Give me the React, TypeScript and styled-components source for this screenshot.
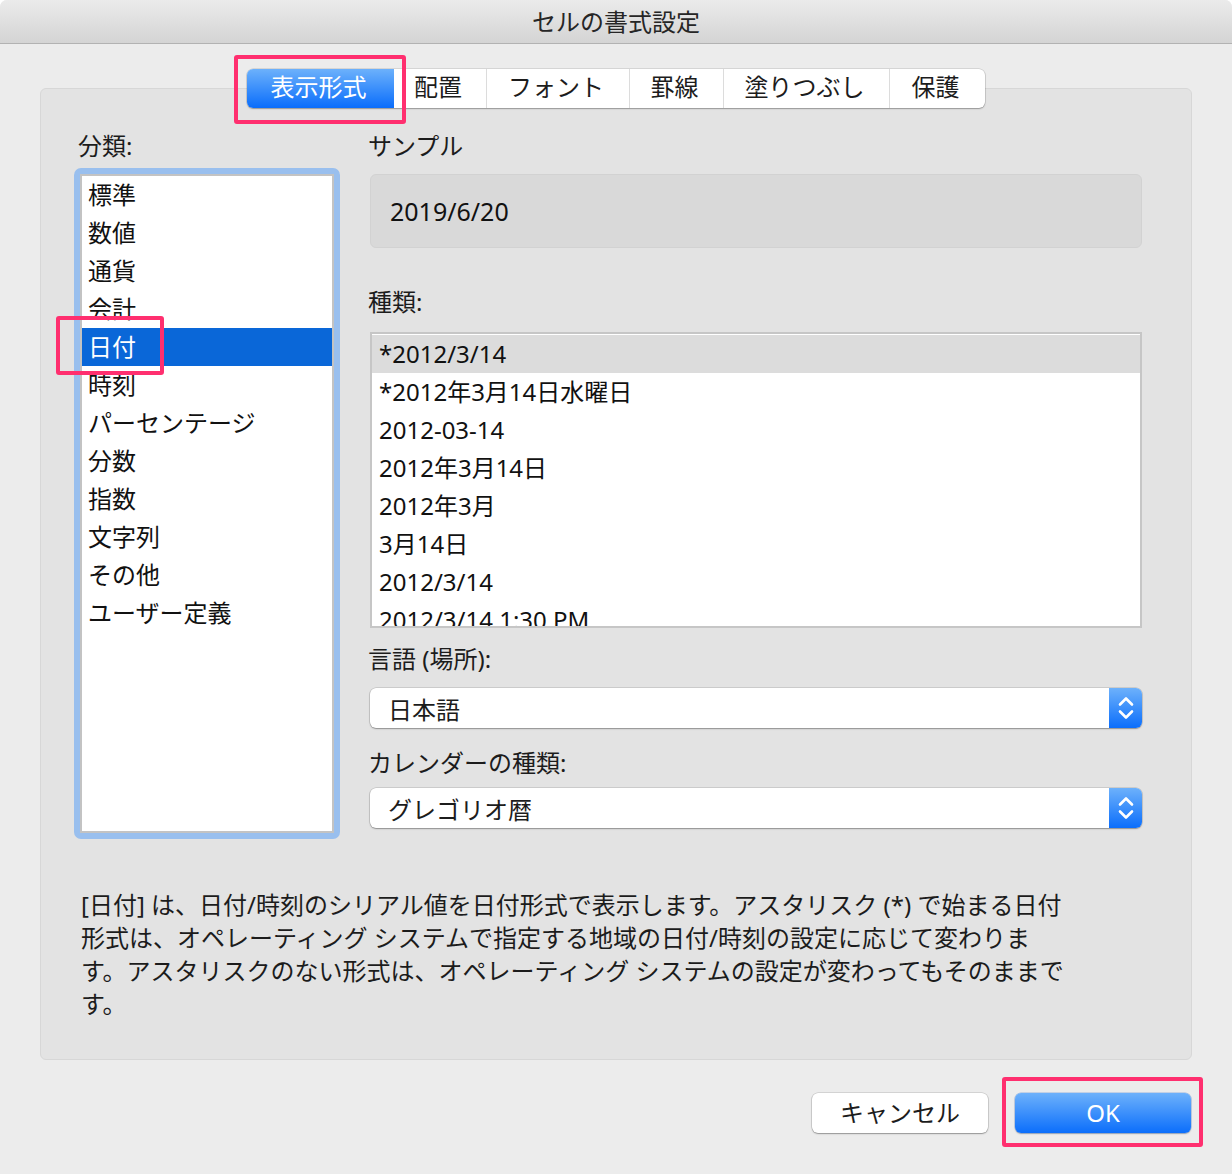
import React from 'react';
import styled, { createGlobalStyle } from 'styled-components';

const GlobalStyle = createGlobalStyle`
  html, body { margin: 0; padding: 0; background: #ffffff; }
  body { font-family: "Noto Sans", "Noto Sans CJK JP", "Liberation Sans", sans-serif; color: #1c1c1c; }
  * { box-sizing: border-box; }
`;

const Window = styled.div`
  position: relative;
  width: 1232px;
  height: 1174px;
  background: #ececec;
  border-radius: 7px 7px 0 0;
  overflow: hidden;
  display: flex;
  flex-direction: column;
`;

const TitleBar = styled.div`
  height: 44px;
  flex: none;
  display: flex;
  align-items: center;
  justify-content: center;
  background: linear-gradient(#ebebeb, #d4d4d4);
  border-bottom: 1px solid #b2b2b2;
  font-size: 24px;
  color: #262626;
  line-height: 1;
`;

const Body = styled.div`
  padding: 25px 40px 0;
  display: flex;
  flex-direction: column;
`;

const TabBar = styled.div`
  align-self: center;
  position: relative;
  z-index: 1;
  display: flex;
  height: 39px;
  background: #ffffff;
  border-radius: 6px;
  box-shadow: 0 0 0 0.5px rgba(0, 0, 0, 0.18), 0 1px 1.5px rgba(0, 0, 0, 0.28);
`;

const Tab = styled.div<{ $active?: boolean; $w: number }>`
  width: ${p => p.$w}px;
  display: flex;
  align-items: center;
  justify-content: center;
  padding-right: 4px;
  padding-bottom: 3px;
  font-size: 24px;
  line-height: 1;
  color: ${p => (p.$active ? '#ffffff' : '#1c1c1c')};
  background: ${p => (p.$active ? 'linear-gradient(#6cb1fb, #0a6dfb)' : 'transparent')};
  border-left: ${p => (p.$active ? 'none' : '1px solid #dcdcdc')};
  &:first-child { border-radius: 6px 0 0 6px; border-left: none; }
  &:first-child + & { border-left: none; }
`;

const Group = styled.div`
  margin-top: -20px;
  height: 972px;
  background: #e3e3e3;
  border: 1px solid #d7d7d7;
  border-radius: 6px;
  padding: 39px 49px 0 33px;
  display: flex;
  flex-direction: column;
`;

const Columns = styled.div`
  display: grid;
  grid-template-columns: 266px 772px;
  column-gap: 30px;
`;

const Column = styled.div`
  display: flex;
  flex-direction: column;
`;

const Label = styled.div<{ $mt?: number; $indent?: number }>`
  font-size: 24px;
  line-height: 36px;
  height: 36px;
  margin-top: ${p => p.$mt ?? 0}px;
  padding-left: ${p => p.$indent ?? 0}px;
  margin-left: -2px;
  color: #1c1c1c;
  white-space: nowrap;
`;

const FocusRing = styled.div`
  margin-top: 4px;
  height: 671px;
  padding: 6px;
  background: #99bfee;
  border-radius: 7px;
`;

const CategoryList = styled.div`
  height: 100%;
  background: #ffffff;
  border: 2px solid #c3c3c3;
  overflow: hidden;
`;

const CategoryItem = styled.div<{ $selected?: boolean }>`
  height: 38px;
  line-height: 38px;
  padding-left: 6px;
  font-size: 24px;
  white-space: nowrap;
  color: ${p => (p.$selected ? '#ffffff' : '#111111')};
  background: ${p => (p.$selected ? '#0a67d8' : 'transparent')};
`;

const SampleBox = styled.div`
  margin-top: 10px;
  height: 74px;
  background: #d9d9d9;
  border: 1px solid #d2d2d2;
  border-radius: 6px;
  display: flex;
  align-items: center;
  padding-left: 19px;
  font-size: 25px;
  color: #111111;
`;

const TypeList = styled.div`
  margin-top: 12px;
  height: 296px;
  background: #ffffff;
  border: 2px solid #c6c6c6;
  overflow: hidden;
  padding-top: 1px;
`;

const TypeItem = styled.div<{ $selected?: boolean }>`
  height: 38px;
  line-height: 38px;
  padding-left: 7px;
  font-size: 24px;
  white-space: nowrap;
  color: #111111;
  background: ${p => (p.$selected ? '#dcdcdc' : 'transparent')};
`;

const Popup = styled.div<{ $mt: number }>`
  margin-top: ${p => p.$mt}px;
  height: 40px;
  display: flex;
  background: #ffffff;
  border-radius: 6px;
  box-shadow: 0 0 0 0.5px rgba(0, 0, 0, 0.2), 0 1px 1.5px rgba(0, 0, 0, 0.3);
  overflow: hidden;
`;

const PopupValue = styled.div`
  flex: 1;
  display: flex;
  align-items: center;
  padding-left: 18px;
  font-size: 24px;
  color: #1c1c1c;
`;

const Stepper = styled.div`
  width: 33px;
  flex: none;
  display: flex;
  align-items: center;
  justify-content: center;
  background: linear-gradient(#6db1fb, #0b6efb);
`;

const Description = styled.div`
  margin-top: 49px;
  padding-left: 7px;
  font-size: 24px;
  line-height: 33px;
  color: #1c1c1c;
`;

const Line = styled.div`
  white-space: nowrap;
`;

const ButtonRow = styled.div`
  margin-top: 33px;
  display: flex;
  justify-content: flex-end;
  gap: 27px;
  padding-right: 1px;
`;

const Button = styled.div<{ $primary?: boolean }>`
  width: 176px;
  height: 40px;
  display: flex;
  align-items: center;
  justify-content: center;
  border-radius: 6px;
  font-size: 24px;
  line-height: 1;
  color: ${p => (p.$primary ? '#ffffff' : '#1c1c1c')};
  background: ${p => (p.$primary ? 'linear-gradient(#6db1fb, #0b6efb)' : '#ffffff')};
  box-shadow: ${p =>
    p.$primary
      ? '0 0 0 0.5px rgba(0, 80, 200, 0.35), 0 1px 1.5px rgba(0, 0, 0, 0.25)'
      : '0 0 0 0.5px rgba(0, 0, 0, 0.2), 0 1px 1.5px rgba(0, 0, 0, 0.3)'};
`;

// red annotation frames drawn over the dialog
const Callout = styled.div<{ $x: number; $y: number; $w: number; $h: number }>`
  position: absolute;
  left: ${p => p.$x}px;
  top: ${p => p.$y}px;
  width: ${p => p.$w}px;
  height: ${p => p.$h}px;
  border: 4px solid #ff2f6f;
  border-radius: 3px;
  pointer-events: none;
  z-index: 5;
`;

const StepperIcon = () => (
  <svg width="18" height="26" viewBox="0 0 18 26" fill="none">
    <path d="M3 9.5 L9 3.5 L15 9.5" stroke="#fff" strokeWidth="2.6" strokeLinecap="round" strokeLinejoin="round" />
    <path d="M3 16.5 L9 22.5 L15 16.5" stroke="#fff" strokeWidth="2.6" strokeLinecap="round" strokeLinejoin="round" />
  </svg>
);

const tabs = [
  { label: '表示形式', w: 147 },
  { label: '配置', w: 92 },
  { label: 'フォント', w: 143 },
  { label: '罫線', w: 94 },
  { label: '塗りつぶし', w: 166 },
  { label: '保護', w: 96 },
];

const categories = [
  '標準', '数値', '通貨', '会計', '日付', '時刻', 'パーセンテージ',
  '分数', '指数', '文字列', 'その他', 'ユーザー定義',
];

const types = [
  '*2012/3/14',
  '*2012年3月14日水曜日',
  '2012-03-14',
  '2012年3月14日',
  '2012年3月',
  '3月14日',
  '2012/3/14',
  '2012/3/14 1:30 PM',
];

const App: React.FC = () => {
  return (
    <>
      <GlobalStyle />
      <Window>
        <TitleBar>セルの書式設定</TitleBar>
        <Body>
          <TabBar>
            {tabs.map((t, i) => (
              <Tab key={t.label} $w={t.w} $active={i === 0}>{t.label}</Tab>
            ))}
          </TabBar>
          <Group>
            <Columns>
              <Column>
                <Label $indent={6}>分類:</Label>
                <FocusRing>
                  <CategoryList>
                    {categories.map(c => (
                      <CategoryItem key={c} $selected={c === '日付'}>{c}</CategoryItem>
                    ))}
                  </CategoryList>
                </FocusRing>
              </Column>
              <Column>
                <Label>サンプル</Label>
                <SampleBox>2019/6/20</SampleBox>
                <Label $mt={36}>種類:</Label>
                <TypeList>
                  {types.map((t, i) => (
                    <TypeItem key={i} $selected={i === 0}>{t}</TypeItem>
                  ))}
                </TypeList>
                <Label $mt={13}>言語 (場所):</Label>
                <Popup $mt={11}>
                  <PopupValue>日本語</PopupValue>
                  <Stepper><StepperIcon /></Stepper>
                </Popup>
                <Label $mt={17}>カレンダーの種類:</Label>
                <Popup $mt={7}>
                  <PopupValue>グレゴリオ暦</PopupValue>
                  <Stepper><StepperIcon /></Stepper>
                </Popup>
              </Column>
            </Columns>
            <Description>
              <Line>[日付] は、日付/時刻のシリアル値を日付形式で表示します。アスタリスク (*) で始まる日付</Line>
              <Line>形式は、オペレーティング システムで指定する地域の日付/時刻の設定に応じて変わりま</Line>
              <Line>す。アスタリスクのない形式は、オペレーティング システムの設定が変わってもそのままで</Line>
              <Line>す。</Line>
            </Description>
          </Group>
          <ButtonRow>
            <Button>キャンセル</Button>
            <Button $primary>OK</Button>
          </ButtonRow>
        </Body>
        <Callout $x={234} $y={55} $w={172} $h={69} />
        <Callout $x={56} $y={316} $w={108} $h={59} />
        <Callout $x={1002} $y={1077} $w={201} $h={70} />
      </Window>
    </>
  );
};

export default App;
